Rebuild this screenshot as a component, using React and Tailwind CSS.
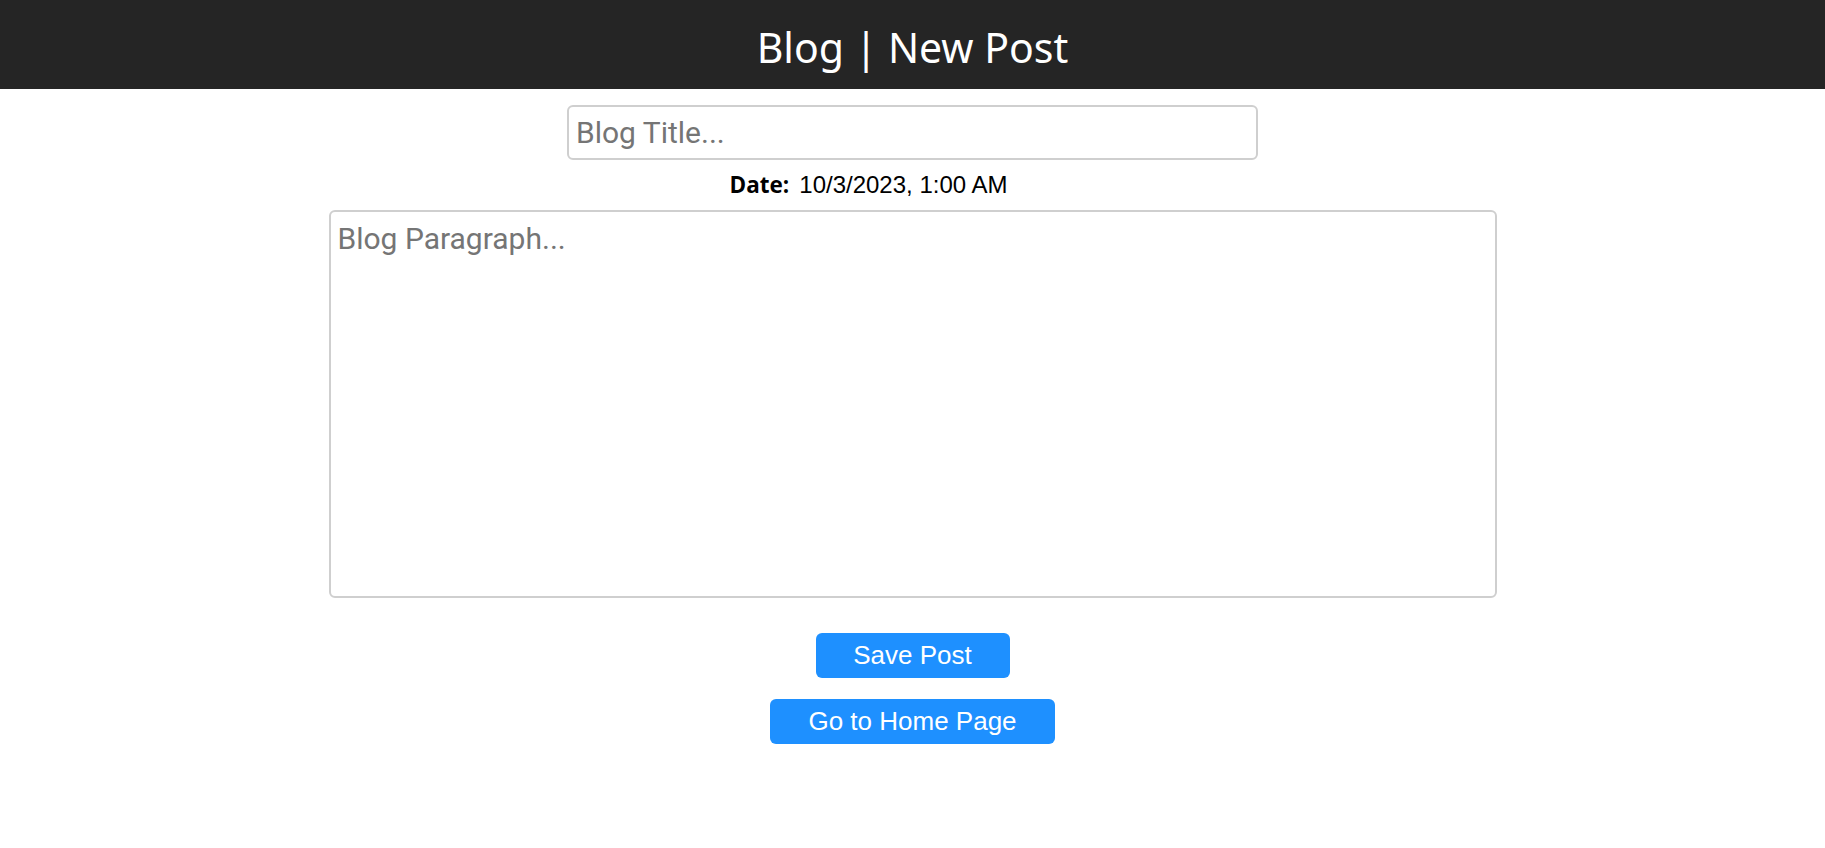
import { useState } from 'react';

export default function App() {
    const [title, setTitle] = useState('');
    const [body, setBody] = useState('');

    return (
        <div className="min-h-screen bg-white">
            <header className="h-[89px] bg-[#252525] flex items-center justify-center">
                <h1 className="text-white text-[41px] font-normal font-['Noto_Sans',sans-serif] leading-none mt-[5px]">Blog | New Post</h1>
            </header>

            <main className="flex flex-col items-center">
                <input value={title} onChange={(e) => setTitle(e.target.value)} placeholder="Blog Title..."
                    className="mt-[16px] w-[691px] h-[55px] px-[7px] border-2 border-[#cfcfcf] rounded-md text-[30px] font-['Roboto',sans-serif] placeholder:text-[#757575] outline-none" />

                {/* date sits a bit left of centre in the original */}
                <p className="mt-[11px] mr-[88px] text-[24px] leading-[28px] font-['Liberation_Sans',sans-serif] text-black">
                    <span className="font-bold text-[22.5px] font-['Open_Sans',sans-serif] mr-[10px]">Date:</span>10/3/2023, 1:00 AM
                </p>

                <textarea value={body} onChange={(e) => setBody(e.target.value)} placeholder="Blog Paragraph..."
                    className="mt-[11px] w-[1168px] h-[388px] px-[7px] py-1 border-2 border-[#cfcfcf] rounded-md text-[30px] font-['Roboto',sans-serif] placeholder:text-[#757575] outline-none resize-none" />

                <button className="mt-[35px] w-[194px] h-[45px] bg-[#1e90ff] text-white rounded-md text-[26px] font-['Liberation_Sans',sans-serif] cursor-pointer">
                    Save Post
                </button>
                <button className="mt-[21px] w-[285px] h-[45px] bg-[#1e90ff] text-white rounded-md text-[26px] font-['Liberation_Sans',sans-serif] cursor-pointer">
                    Go to Home Page
                </button>
            </main>
        </div>
    );
}
